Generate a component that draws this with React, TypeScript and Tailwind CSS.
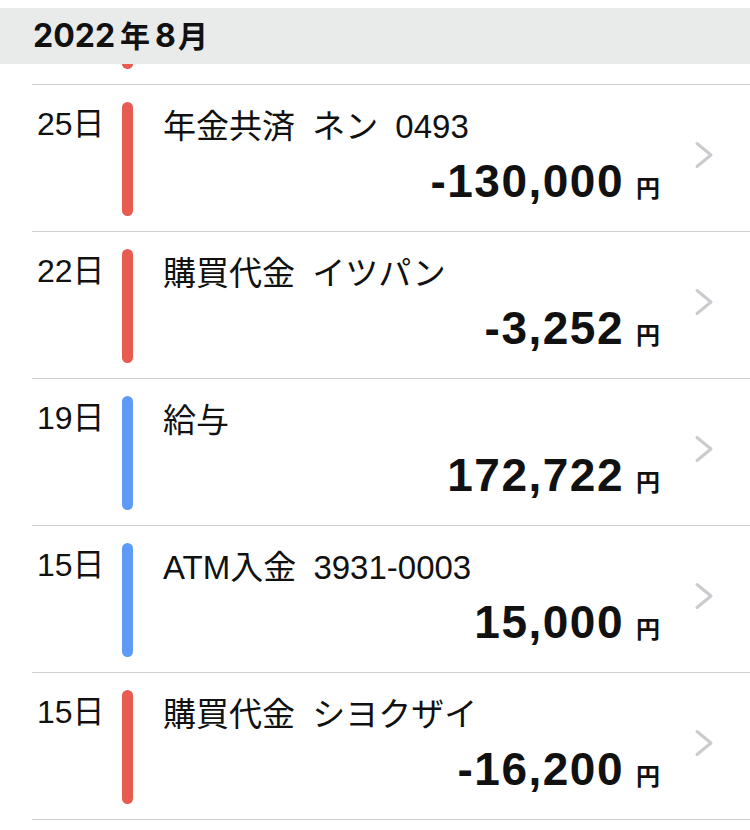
const rows = [
  { day: "25日", title: "年金共済 ネン 0493", amount: "-130,000", kind: "out" },
  { day: "22日", title: "購買代金 イツパン", amount: "-3,252", kind: "out" },
  { day: "19日", title: "給与", amount: "172,722", kind: "in" },
  { day: "15日", title: "ATM入金 3931-0003", amount: "15,000", kind: "in" },
  { day: "15日", title: "購買代金 シヨクザイ", amount: "-16,200", kind: "out" },
];

const jp = "font-['Liberation_Sans','Noto_Sans_CJK_JP',sans-serif]";

function Chevron() {
  return (
    <svg width="22" height="30" viewBox="0 0 22 30" fill="none">
      <path d="M3 2.5 L17 14 L3 25.5" stroke="#cbcbcf" strokeWidth="3" strokeLinecap="round" strokeLinejoin="round" />
    </svg>
  );
}

function Row({ day, title, amount, kind }: { day: string; title: string; amount: string; kind: string }) {
  return (
    <div className="ml-[32px] flex h-[147px] border-b border-[#d1d1d3]">
      <div className={`w-[90px] pl-[5px] pt-[23px] text-[32px] leading-[32px] text-[#111] ${jp}`}>{day}</div>
      <div
        className={`mt-[17px] h-[114px] w-[11px] rounded-full ${kind === "out" ? "bg-[#e85b51]" : "bg-[#5e9bf6]"}`}
      />
      <div className="flex flex-1 flex-col pl-[30px]">
        <div className={`pt-[22px] text-[33px] leading-[40px] text-[#111] [word-spacing:8px] ${jp}`}>{title}</div>
        <div className="mt-[10px] flex items-baseline justify-end">
          <span className="font-['Liberation_Sans',sans-serif] text-[46px] font-bold leading-[48px] tracking-[1.5px] text-[#111]">
            {amount}
          </span>
          <span className="ml-[12px] font-['Noto_Sans_CJK_JP',sans-serif] text-[24px] font-bold leading-[24px] text-[#111]">
            円
          </span>
        </div>
      </div>
      <div className="w-[90px] pl-[34px] pt-[56px]">
        <Chevron />
      </div>
    </div>
  );
}

export default function App() {
  return (
    <div className="h-[830px] w-[750px] overflow-hidden bg-white">
      <div className="h-[8px]" />
      <div className="flex h-[56px] items-center bg-[#e9eaea] pl-[33px]">
        <span className="font-['Inter',sans-serif] text-[32px] font-bold text-[#111]">
          2022
          <span className="mx-[5px] font-['Noto_Sans_CJK_JP',sans-serif] text-[30px]">年</span>8
          <span className="ml-[2px] font-['Noto_Sans_CJK_JP',sans-serif] text-[30px]">月</span>
        </span>
      </div>
      <div className="ml-[32px] h-[21px] border-b border-[#d1d1d3] pl-[90px]">
        <div className="h-[5px] w-[11px] rounded-b-full bg-[#e85b51]" />
      </div>
      {rows.map((r, i) => (
        <Row key={i} {...r} />
      ))}
    </div>
  );
}
